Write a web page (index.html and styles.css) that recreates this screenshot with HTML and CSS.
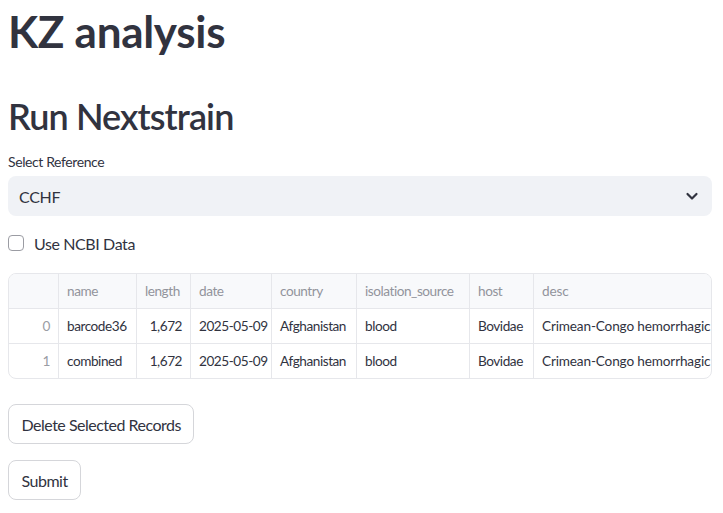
FILE: index.html
```html
<!DOCTYPE html>
<html>
<head>
<meta charset="utf-8">
<link rel="stylesheet" href="styles.css">
</head>
<body>
<main class="main">
  <h1 class="title">KZ analysis</h1>
  <h2 class="subtitle">Run Nextstrain</h2>
  <div class="field">
    <label class="label">Select Reference</label>
    <div class="select">
      <span class="select-value">CCHF</span>
      <svg class="chevron" width="16" height="16" viewBox="0 0 16 16"><path d="M3.5 6 L8 10.5 L12.5 6" fill="none" stroke="#31333f" stroke-width="2.2" stroke-linecap="round" stroke-linejoin="round"/></svg>
    </div>
  </div>
  <label class="checkbox-row">
    <span class="checkbox"></span>
    <span class="checkbox-text">Use NCBI Data</span>
  </label>
  <div class="table-wrap">
    <div class="table">
      <div class="cell head idx"></div>
      <div class="cell head">name</div>
      <div class="cell head">length</div>
      <div class="cell head">date</div>
      <div class="cell head">country</div>
      <div class="cell head">isolation_source</div>
      <div class="cell head">host</div>
      <div class="cell head last">desc</div>

      <div class="cell idx num">0</div>
      <div class="cell">barcode36</div>
      <div class="cell num">1,672</div>
      <div class="cell">2025-05-09</div>
      <div class="cell">Afghanistan</div>
      <div class="cell">blood</div>
      <div class="cell">Bovidae</div>
      <div class="cell last">Crimean-Congo hemorrhagic</div>

      <div class="cell idx num bottom">1</div>
      <div class="cell bottom">combined</div>
      <div class="cell num bottom">1,672</div>
      <div class="cell bottom">2025-05-09</div>
      <div class="cell bottom">Afghanistan</div>
      <div class="cell bottom">blood</div>
      <div class="cell bottom">Bovidae</div>
      <div class="cell last bottom">Crimean-Congo hemorrhagic</div>
    </div>
  </div>
  <button class="btn btn-delete">Delete Selected Records</button>
  <button class="btn btn-submit">Submit</button>
</main>
</body>
</html>
```

FILE: styles.css
```css
* { box-sizing: border-box; }
html, body {
  margin: 0;
  padding: 0;
  background: #ffffff;
}
body {
  font-family: "Lato", "Noto Sans", "Liberation Sans", sans-serif;
  color: #31333f;
}
.main {
  width: 704px;
  margin-left: 8px;
  display: flex;
  flex-direction: column;
  align-items: flex-start;
}
.title {
  margin: 0;
  padding-top: 5px;
  font-size: 44px;
  font-weight: 700;
  line-height: 52px;
  letter-spacing: -0.3px;
}
.subtitle {
  margin: 37px 0 0 0;
  font-size: 36px;
  font-weight: 600;
  line-height: 44px;
  letter-spacing: -0.9px;
}
.field {
  margin-top: 14px;
  width: 100%;
  display: flex;
  flex-direction: column;
}
.label {
  font-size: 14px;
  line-height: 20px;
  height: 24px;
  letter-spacing: -0.4px;
}
.select {
  height: 40px;
  width: 100%;
  background: #f0f2f6;
  border-radius: 8px;
  display: flex;
  align-items: center;
  justify-content: space-between;
  padding: 0 12px 0 11px;
}
.select-value {
  font-size: 16px;
  letter-spacing: -0.3px;
}
.chevron { display: block; }
.checkbox-row {
  margin-top: 17px;
  display: flex;
  align-items: center;
  gap: 10px;
  height: 20px;
}
.checkbox {
  width: 16px;
  height: 16px;
  border: 1px solid #9b9ca3;
  border-radius: 4px;
  background: #fff;
}
.checkbox-text {
  font-size: 16px;
  letter-spacing: -0.4px;
}
.table-wrap {
  margin-top: 20px;
  width: 100%;
  border: 1px solid #e6e7eb;
  border-radius: 8px;
  overflow: hidden;
}
.table {
  display: grid;
  grid-template-columns: 50px 78px 54px 81px 85px 113px 64px 1fr;
  grid-template-rows: 35px 35px 34px;
  font-size: 13.6px;
  letter-spacing: -0.45px;
}
.cell {
  display: flex;
  align-items: center;
  padding: 0 8px;
  white-space: nowrap;
  overflow: hidden;
  border-right: 1px solid #e6e7eb;
  border-bottom: 1px solid #e6e7eb;
  color: #31333f;
}
.cell.head {
  background: #f8f9fb;
  color: #92949c;
}
.cell.last {
  border-right: none;
  padding-right: 0;
  letter-spacing: -0.15px;
}
.cell.num { justify-content: flex-end; }
.cell.idx { color: #9a9ca4; }
.cell.bottom { border-bottom: none; }
.btn {
  font-family: inherit;
  font-size: 16px;
  letter-spacing: -0.5px;
  color: #31333f;
  background: #fff;
  border: 1px solid #d5d6da;
  border-radius: 8px;
  height: 40px;
  padding: 0 12.5px;
  cursor: pointer;
}
.btn-delete { margin-top: 25px; }
.btn-submit { margin-top: 16px; }
```
